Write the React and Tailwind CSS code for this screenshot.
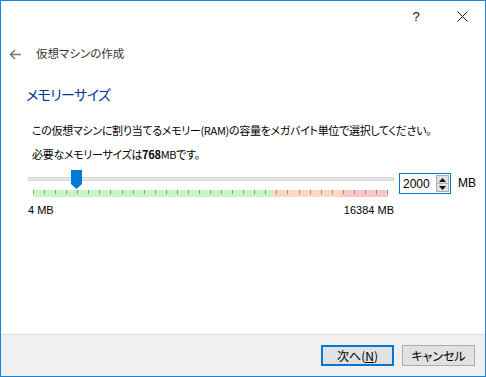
import React from "react";

const jp = "[font-family:'Noto_Sans_CJK_JP',sans-serif] [font-feature-settings:'palt']";

function Ticks() {
  const ticks = Array.from({ length: 33 });
  return (
    <div className="absolute left-[5px] top-[20px] w-[355px] h-[7px] flex">
      <div className="h-full bg-[#c6f8c6]" style={{ width: "240px" }} />
      <div className="h-full bg-[#ffd6c2]" style={{ width: "68px" }} />
      <div className="h-full bg-[#ffc6c6]" style={{ width: "47px" }} />
      <div className="absolute inset-0 flex justify-between">
        {ticks.map((_, i) => (
          <div key={i} className="w-px h-[4px] bg-[#8f8f8f]" />
        ))}
      </div>
    </div>
  );
}

export default function App() {
  return (
    <div className={`w-[486px] h-[377px] border border-[#1883d7] bg-white flex flex-col text-black ${jp}`}>
      {/* title bar */}
      <div className="h-[31px] flex justify-end shrink-0">
        <div className="w-[46px] h-full flex items-center justify-center text-[13px] text-[#111] [font-family:'Liberation_Sans',sans-serif]">?</div>
        <div className="w-[46px] h-full flex items-center justify-center">
          <svg width="11" height="11" viewBox="0 0 11 11">
            <path d="M0.5 0.5 L10.5 10.5 M10.5 0.5 L0.5 10.5" stroke="#111" strokeWidth="1" />
          </svg>
        </div>
      </div>

      {/* content */}
      <div className="flex-1 flex flex-col">
        <div className="flex items-center h-[14px] mt-[15px]">
          <svg className="ml-[8px]" width="13" height="11" viewBox="0 0 13 11">
            <path d="M12 5.5 H2 M6 1 L1.5 5.5 L6 10" stroke="#7a7a7a" strokeWidth="1.6" fill="none" />
          </svg>
          <span className="ml-[14px] text-[11.5px] text-[#333] leading-none">仮想マシンの作成</span>
        </div>

        <div className="ml-[25px] mt-[26px] text-[14px] tracking-[-0.6px] leading-none text-[#003399]">メモリーサイズ</div>

        <div className="ml-[31px] mt-[24px] text-[11px] tracking-[-0.3px] leading-none">
          この仮想マシンに割り当てるメモリー(RAM)の容量をメガバイト単位で選択してください。
        </div>
        <div className="ml-[31px] mt-[13px] text-[11px] tracking-[-0.3px] leading-none">
          必要なメモリーサイズは<span className="font-bold">768</span>MBです。
        </div>

        <div className="flex mt-[10px] ml-[27px]">
          <div className="relative w-[366px] h-[28px]">
            <div className="absolute left-0 top-[7px] w-[366px] h-[4px] bg-[#e7e7e7] border border-[#d6d6d6]" />
            <Ticks />
            <svg className="absolute left-[43px] top-0" width="11" height="19" viewBox="0 0 11 19">
              <path d="M0 0 H11 V14 L5.5 19 L0 14 Z" fill="#0078d7" />
            </svg>
          </div>
          <div className="ml-[5px] mt-[3px] w-[52px] h-[21px] border border-[#0078d7] flex items-center">
            <span className="ml-[3px] flex-1 text-[12px] leading-none [font-family:'Liberation_Sans',sans-serif]">2000</span>
            <div className="w-[13px] h-[17px] mr-[1px] flex flex-col border border-[#adadad] bg-[#e1e1e1]">
              <div className="flex-1 flex items-center justify-center border-b border-[#adadad]">
                <svg width="7" height="4" viewBox="0 0 7 4"><path d="M0 4 L3.5 0 L7 4 Z" fill="#111" /></svg>
              </div>
              <div className="flex-1 flex items-center justify-center">
                <svg width="7" height="4" viewBox="0 0 7 4"><path d="M0 0 L3.5 4 L7 0 Z" fill="#111" /></svg>
              </div>
            </div>
          </div>
          <span className="ml-[7px] mt-[7px] text-[12px] leading-none [font-family:'Liberation_Sans',sans-serif]">MB</span>
        </div>

        <div className="flex w-[366px] ml-[27px] mt-[7px] justify-between text-[11px] leading-none [font-family:'Liberation_Sans',sans-serif]">
          <span>4 MB</span>
          <span>16384 MB</span>
        </div>
      </div>

      {/* footer */}
      <div className="h-[42px] shrink-0 border-t border-[#dfdfdf] bg-[#f0f0f0] flex justify-end items-start pt-[10px] pr-[10px] gap-[8px]">
        <button className="w-[73px] h-[21px] border-2 border-[#0078d7] bg-[#e1e1e1] text-[12px] leading-none flex items-center justify-center">
          次へ(<span className="underline">N</span>)
        </button>
        <button className="w-[73px] h-[21px] border border-[#adadad] bg-[#e1e1e1] text-[12px] leading-none flex items-center justify-center">
          キャンセル
        </button>
      </div>
    </div>
  );
}
